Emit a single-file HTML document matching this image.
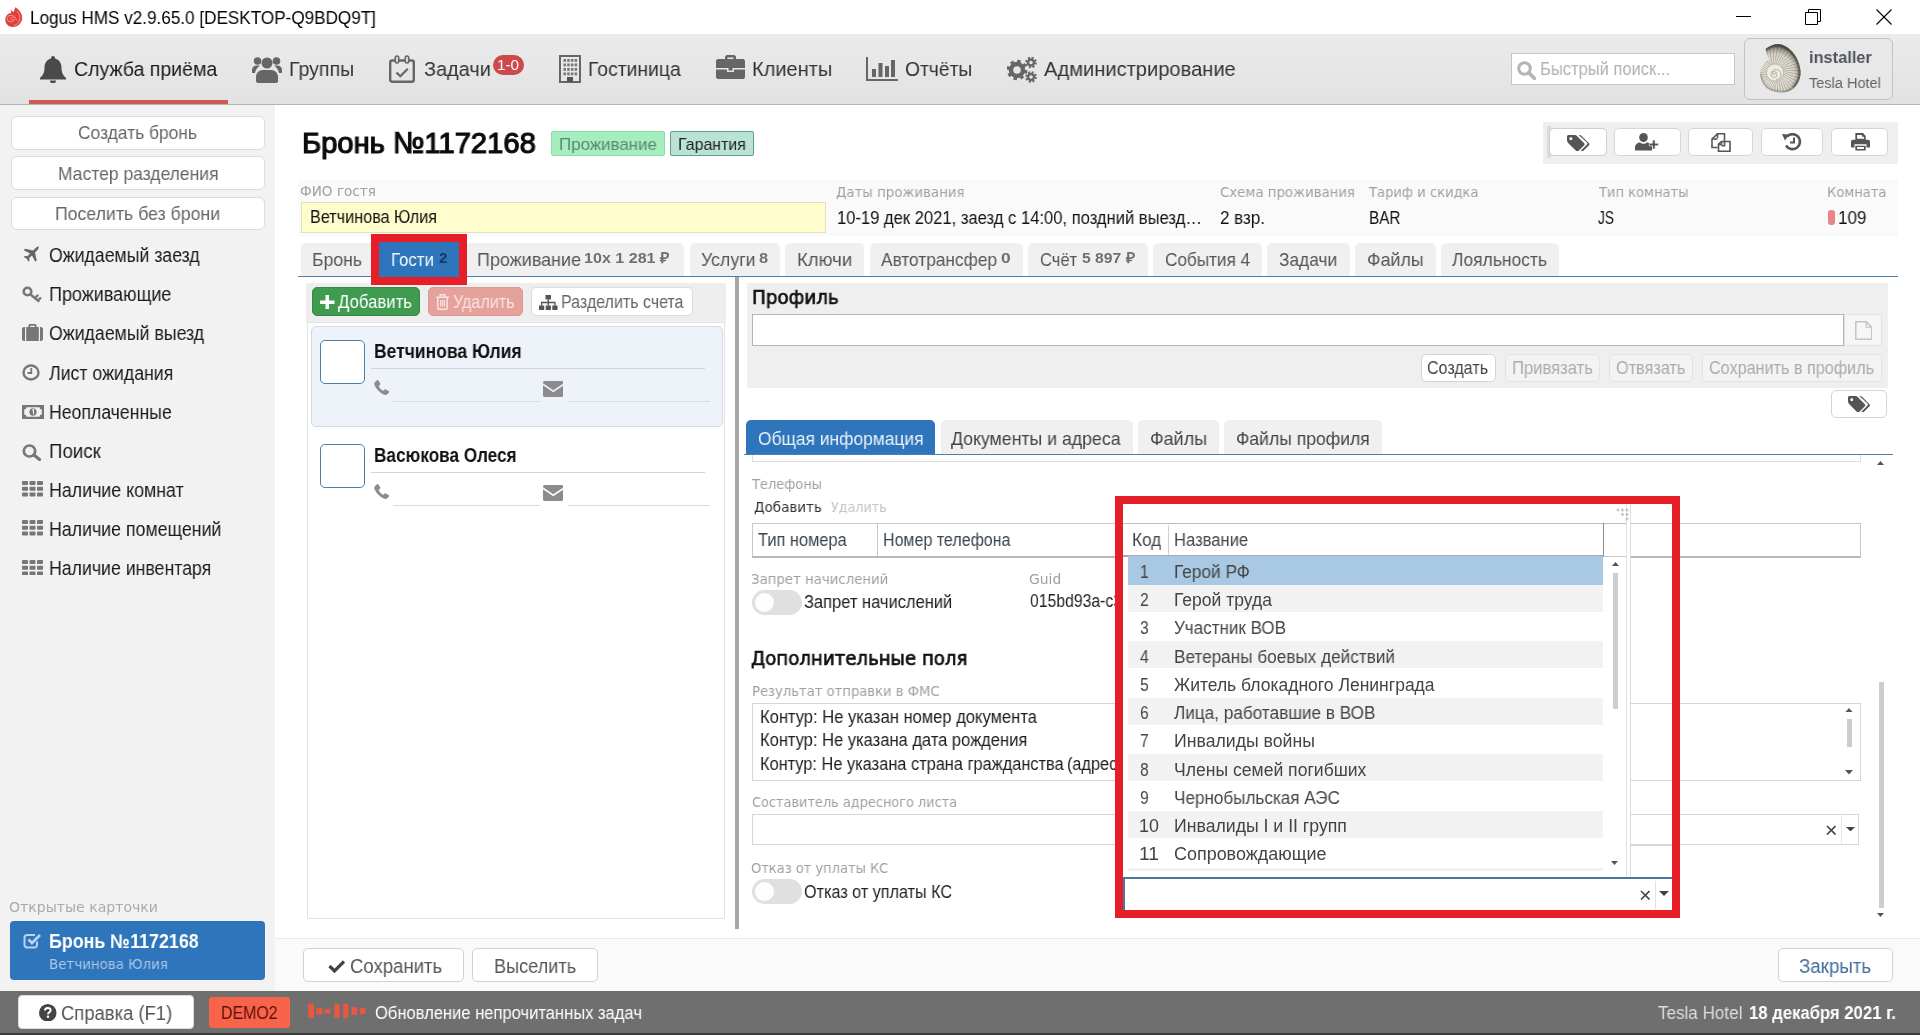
<!DOCTYPE html><html lang="ru"><head><meta charset="utf-8"><title>Logus HMS</title><style>

html,body{margin:0;padding:0;}
body{width:1920px;height:1035px;position:relative;overflow:hidden;background:#fff;font-family:"Liberation Sans", sans-serif;}
.b{position:absolute;box-sizing:border-box;}
.t{position:absolute;white-space:nowrap;line-height:1;transform-origin:0 0;will-change:transform;}

</style></head><body>
<div class="b" style="left:0px;top:0px;width:1920px;height:34px;background:#fff;"></div>
<svg class="b" style="left:5px;top:7px;" width="18" height="20" viewBox="0 0 18 20" preserveAspectRatio="none"><path d="M5.300 2.300C6.200 3.800 7.300 4.700 8.800 5L10.200.2C14.500 2.500 18 7.500 17 12.500 16 17 12.300 20 7.800 20 3.500 20 .3 16.800.3 12.800.3 9 3 6.200 6.300 6z" fill="#dd3f3b"/><g fill="none" stroke="#ff918b" stroke-width="1"><path d="M7.500 13.200a1.600 1.600 0 1 1 1.600-1.600 3.400 3.400 0 1 1-3.400-3.400c3 0 5.600 2.300 5.600 5.600"/><path d="M12 4c2.200 2.300 3.400 5.500 2.600 9-.7 3-3 5-6 5.300"/></g></svg>
<span class="t" style="left:30.04px;top:10.00px;font-size:17.5px;color:#000;transform:scaleX(0.9780);">Logus HMS v2.9.65.0 [DESKTOP-Q9BDQ9T]</span>
<div class="b" style="left:1736px;top:16px;width:15px;height:1px;background:#000;"></div>
<svg class="b" style="left:1805px;top:9px;" width="16" height="16" viewBox="0 0 16 16" preserveAspectRatio="none"><path d="M3.500 3.500V.5h12v12h-3M.5 3.500h12v12H.5z" fill="none" stroke="#000" stroke-width="1"/></svg>
<svg class="b" style="left:1876px;top:9px;" width="16" height="16" viewBox="0 0 16 16" preserveAspectRatio="none"><path d="M.5.5l15 15M15.500.5l-15 15" fill="none" stroke="#000" stroke-width="1.100"/></svg>
<div class="b" style="left:0px;top:34px;width:1920px;height:71px;background:linear-gradient(#ebebeb,#e2e2e2);border-bottom:1px solid #b4b4b4;"></div>
<div class="b" style="left:29px;top:100px;width:199px;height:4px;background:#cf5a4e;"></div>
<svg class="b" style="left:40px;top:56px;" width="26" height="27" viewBox="0 0 26 27" preserveAspectRatio="none"><path d="M13 0a2 2 0 0 1 2 2v.6c4 1 6.500 4.400 6.500 9 0 5.500 2 8.400 4.500 10.400v1.500H0V22c2.500-2 4.500-4.900 4.500-10.400 0-4.600 2.500-8 6.500-9V2a2 2 0 0 1 2-2zM10 24.500h6a3 3 0 0 1-6 0z" fill="#4a4a4a"/></svg>
<span class="t" style="left:73.87px;top:59.00px;font-size:20.5px;color:#1a1a1a;transform:scaleX(0.9524);">Служба приёма</span>
<svg class="b" style="left:252px;top:55px;" width="30" height="28" viewBox="0 0 30 28" preserveAspectRatio="none"><g fill="#666"><circle cx="15" cy="8" r="5.500"/><path d="M6 28c-1 0-2-.8-2-2v-4c0-4 3-7 7-7h8c4 0 7 3 7 7v4c0 1.200-1 2-2 2z"/><circle cx="5.500" cy="6" r="3.800"/><circle cx="24.500" cy="6" r="3.800"/><path d="M0 18v-3c0-2.500 2-4.500 4.500-4.500H8c-2 1.500-4.500 4-5 7.500zM30 18v-3c0-2.500-2-4.500-4.500-4.500H22c2 1.500 4.500 4 5 7.500z"/></g></svg>
<span class="t" style="left:288.87px;top:59.00px;font-size:20.5px;color:#333;transform:scaleX(0.9553);">Группы</span>
<svg class="b" style="left:389px;top:55px;" width="26" height="28" viewBox="0 0 26 28" preserveAspectRatio="none"><g fill="none" stroke="#666"><rect x="1.200" y="5.500" width="23.600" height="21.300" rx="2" stroke-width="2.400"/><rect x="6.300" y="1" width="3.400" height="7" rx="1.700" stroke-width="1.600" fill="#e6e6e6"/><rect x="16.300" y="1" width="3.400" height="7" rx="1.700" stroke-width="1.600" fill="#e6e6e6"/><path d="M7.500 17.500l3.800 3.800 7.500-7.500" stroke-width="2.200"/></g></svg>
<span class="t" style="left:423.87px;top:59.00px;font-size:20.5px;color:#333;transform:scaleX(0.9700);">Задачи</span>
<div class="b" style="left:492.5px;top:54.5px;width:31.5px;height:20.5px;background:#cc4a4c;border-radius:10.5px;"></div>
<span class="t" style="left:497.2px;top:58.00px;font-size:14.5px;color:#fff;transform:scaleX(1.0539);">1-0</span>
<svg class="b" style="left:559px;top:55px;" width="22" height="28" viewBox="0 0 22 28" preserveAspectRatio="none"><rect x="1" y="1" width="20" height="26" fill="none" stroke="#666" stroke-width="2"/><g fill="#777"><rect x="4.500" y="4" width="2.500" height="2.800"/><rect x="8.200" y="4" width="2.500" height="2.800"/><rect x="11.900" y="4" width="2.500" height="2.800"/><rect x="15.600" y="4" width="2.500" height="2.800"/><rect x="4.500" y="8.500" width="2.500" height="2.800"/><rect x="8.200" y="8.500" width="2.500" height="2.800"/><rect x="11.900" y="8.500" width="2.500" height="2.800"/><rect x="15.600" y="8.500" width="2.500" height="2.800"/><rect x="4.500" y="13" width="2.500" height="2.800"/><rect x="8.200" y="13" width="2.500" height="2.800"/><rect x="11.900" y="13" width="2.500" height="2.800"/><rect x="15.600" y="13" width="2.500" height="2.800"/><rect x="4.500" y="17.500" width="2.500" height="2.800"/><rect x="8.200" y="17.500" width="2.500" height="2.800"/><rect x="11.900" y="17.500" width="2.500" height="2.800"/><rect x="15.600" y="17.500" width="2.500" height="2.800"/><rect x="8" y="22" width="6" height="5" fill="#555"/></g></svg>
<span class="t" style="left:588.37px;top:59.00px;font-size:20.5px;color:#333;transform:scaleX(0.9452);">Гостиница</span>
<svg class="b" style="left:716px;top:55px;" width="29" height="24" viewBox="0 0 29 24" preserveAspectRatio="none"><g fill="#666"><path d="M9 4V2c0-1 1-2 2-2h7c1 0 2 1 2 2v2h-2.500V2.500h-6V4z"/><path d="M2 4h25c1 0 2 1 2 2v7H0V6c0-1 1-2 2-2z"/><path d="M0 14.500h11V17h7v-2.500h11V22c0 1-1 2-2 2H2c-1 0-2-1-2-2z"/><rect x="12.500" y="13" width="4" height="2.600"/></g></svg>
<span class="t" style="left:751.87px;top:59.00px;font-size:20.5px;color:#333;transform:scaleX(0.9764);">Клиенты</span>
<svg class="b" style="left:866px;top:57px;" width="32" height="24" viewBox="0 0 32 24" preserveAspectRatio="none"><path d="M1 0v23h31" fill="none" stroke="#666" stroke-width="2"/><g fill="#666"><rect x="6" y="12" width="4" height="8"/><rect x="12.500" y="6" width="4" height="14"/><rect x="19" y="9" width="4" height="11"/><rect x="25" y="3" width="4" height="17"/></g></svg>
<span class="t" style="left:904.87px;top:59.00px;font-size:20.5px;color:#333;transform:scaleX(0.9401);">Отчёты</span>
<svg class="b" style="left:1007px;top:56px;" width="31" height="27" viewBox="0 0 31 27" preserveAspectRatio="none"><g fill="none" stroke="#666"><circle cx="10" cy="14" r="6" stroke-width="4.500"/><circle cx="10" cy="14" r="8.800" stroke-width="3" stroke-dasharray="3.400 3.500"/><circle cx="24" cy="6.500" r="3" stroke-width="2.400"/><circle cx="24" cy="6.500" r="4.800" stroke-width="2" stroke-dasharray="2 1.770"/><circle cx="24" cy="21" r="3" stroke-width="2.400"/><circle cx="24" cy="21" r="4.800" stroke-width="2" stroke-dasharray="2 1.770"/></g></svg>
<span class="t" style="left:1043.87px;top:59.00px;font-size:20.5px;color:#333;transform:scaleX(0.9809);">Администрирование</span>
<div class="b" style="left:1510.5px;top:52.5px;width:224.0px;height:32.0px;background:#fff;border:1px solid #c6c6c6;"></div>
<svg class="b" style="left:1517px;top:61px;" width="19" height="19" viewBox="0 0 19 19" preserveAspectRatio="none"><circle cx="7.500" cy="7.500" r="5.800" fill="none" stroke="#b4b4b4" stroke-width="3"/><path d="M11.800 11.800l5.500 5.500" stroke="#b4b4b4" stroke-width="3.600" stroke-linecap="round"/></svg>
<span class="t" style="left:1539.98px;top:60.00px;font-size:18.5px;color:#b0b0b0;transform:scaleX(0.8930);">Быстрый поиск...</span>
<div class="b" style="left:1743.5px;top:37.5px;width:149.5px;height:62.0px;background:#e8e8e8;border:1px solid #c2c2c2;border-radius:6px;"></div>
<svg class="b" style="left:1759.500px;top:44px" width="41" height="48.500" viewBox="0 0 41 48.500">
<defs><radialGradient id="sh" gradientUnits="userSpaceOnUse" cx="15" cy="29" r="27"><stop offset="0" stop-color="#f7f4ed"/><stop offset=".4" stop-color="#ebe7de"/><stop offset=".72" stop-color="#d6d2c7"/><stop offset=".9" stop-color="#9a968b"/><stop offset="1" stop-color="#5a5750"/></radialGradient>
<clipPath id="shc"><path d="M5.500 5C9 2 14 0 18.500 0 23 .3 30 4 34 10c3 4 6 10 6.500 17 .5 6-2 13-6.500 17-3 2.500-6 4.200-10 4.500-5 .3-11-.5-16-3.500C3.500 42 .5 36 0 30c0-4 2.500-9.500 6-12.500 1.500-1 3-2 4-2C8 13 6 9 5.500 5z"/></clipPath></defs>
<g clip-path="url(#shc)"><rect width="41" height="48.500" fill="url(#sh)"/><path d="M23.0 28.5L41.7 35.2M22.9 29.7L40.3 39.2M22.6 30.8L38.3 42.9M22.2 31.9L35.8 46.3M21.6 32.9L32.7 49.3M20.8 33.8L29.3 51.7M19.9 34.6L25.5 53.6M18.9 35.2L21.4 54.8M17.8 35.6L17.2 55.4M16.7 35.9L13.0 55.4M15.5 36.0L8.8 54.7M14.3 35.9L4.8 53.3M13.2 35.6L1.1 51.3M12.1 35.2L-2.3 48.8M11.1 34.6L-5.3 45.7M10.2 33.8L-7.7 42.3M9.4 32.9L-9.6 38.5M8.8 31.9L-10.8 34.4M8.4 30.8L-11.4 30.2M8.1 29.7L-11.4 26.0M8.0 28.5L-10.7 21.8M8.1 27.3L-9.3 17.8M8.4 26.2L-7.3 14.1M8.8 25.1L-4.8 10.7M9.4 24.1L-1.7 7.7M10.2 23.2L1.7 5.3M11.1 22.4L5.5 3.4M12.1 21.8L9.6 2.2M13.2 21.4L13.8 1.6M14.3 21.1L18.0 1.6M15.5 21.0L22.2 2.3M16.7 21.1L26.2 3.7M17.8 21.4L29.9 5.7M18.9 21.8L33.3 8.2M19.9 22.4L36.3 11.3M20.8 23.2L38.7 14.7M21.6 24.1L40.6 18.5M22.2 25.1L41.8 22.6M22.6 26.2L42.4 26.8M22.9 27.3L42.4 31.0" stroke="#4d4a42" stroke-opacity=".38" stroke-width=".8" fill="none"/>
<circle cx="15" cy="28.500" r="8.500" fill="#efece4"/><circle cx="15" cy="28.500" r="8.500" fill="none" stroke="#b9b5a9" stroke-width=".8"/>
<path d="M15.500 29a1.500 1.500 0 1 1-1.500-1.500 3 3 0 1 1-3 3 5 5 0 1 1 5 5" fill="none" stroke="#b3afa2" stroke-width="1"/>
<path d="M5.500 5C9 2 14 0 18.500 0 23 .3 30 4 34 10c3 4 6 10 6.500 17 .5 6-2 13-6.500 17" fill="none" stroke="#3f3d38" stroke-opacity=".5" stroke-width="5"/>
<path d="M34 44c-3 2.500-6 4.200-10 4.500-5 .3-11-.5-16-3.500C3.500 42 .5 36 0 30" fill="none" stroke="#6a675f" stroke-opacity=".35" stroke-width="4"/></g>
</svg>
<span class="t" style="left:1808.87px;top:49.00px;font-size:17px;color:#50545a;font-weight:bold;transform:scaleX(0.9641);">installer</span>
<span class="t" style="left:1808.95px;top:75.00px;font-size:15.5px;color:#60646a;transform:scaleX(0.9376);">Tesla Hotel</span>
<div class="b" style="left:0px;top:105px;width:275px;height:886px;background:#f2f2f2;"></div>
<div class="b" style="left:10.5px;top:116px;width:254.0px;height:33.5px;background:#fff;border:1px solid #dcdcdc;border-radius:6px;"></div>
<span class="t" style="left:77.98px;top:124.00px;font-size:18.5px;color:#666;transform:scaleX(0.9411);">Создать бронь</span>
<div class="b" style="left:10.5px;top:156px;width:254.0px;height:33.5px;background:#fff;border:1px solid #dcdcdc;border-radius:6px;"></div>
<span class="t" style="left:57.98px;top:165.00px;font-size:18.5px;color:#666;transform:scaleX(0.9459);">Мастер разделения</span>
<div class="b" style="left:10.5px;top:197px;width:254.0px;height:32.5px;background:#fff;border:1px solid #dcdcdc;border-radius:6px;"></div>
<span class="t" style="left:54.98px;top:205.00px;font-size:18.5px;color:#666;transform:scaleX(0.9567);">Поселить без брони</span>
<span class="t" style="left:49.4px;top:245.00px;font-size:20px;color:#1a1a1a;transform:scaleX(0.8851);">Ожидаемый заезд</span>
<span class="t" style="left:49.4px;top:284.00px;font-size:20px;color:#1a1a1a;transform:scaleX(0.8985);">Проживающие</span>
<span class="t" style="left:49.4px;top:323.00px;font-size:20px;color:#1a1a1a;transform:scaleX(0.8864);">Ожидаемый выезд</span>
<span class="t" style="left:49.4px;top:363.00px;font-size:20px;color:#1a1a1a;transform:scaleX(0.8859);">Лист ожидания</span>
<span class="t" style="left:49.4px;top:402.00px;font-size:20px;color:#1a1a1a;transform:scaleX(0.8826);">Неоплаченные</span>
<span class="t" style="left:49.4px;top:441.00px;font-size:20px;color:#1a1a1a;transform:scaleX(0.9328);">Поиск</span>
<span class="t" style="left:49.4px;top:480.00px;font-size:20px;color:#1a1a1a;transform:scaleX(0.8896);">Наличие комнат</span>
<span class="t" style="left:49.4px;top:519.00px;font-size:20px;color:#1a1a1a;transform:scaleX(0.8875);">Наличие помещений</span>
<span class="t" style="left:49.4px;top:558.00px;font-size:20px;color:#1a1a1a;transform:scaleX(0.8851);">Наличие инвентаря</span>
<svg class="b" style="left:22px;top:246px;" width="17" height="16" viewBox="0 0 17 16" preserveAspectRatio="none"><path d="M16.500.5c.6.600.3 2-.8 3.200L13 6.400l1.700 8-1.400 1.300-3.300-6.300-2.800 2.700.3 2.600-1 1-1.700-3-3-1.700 1-1 2.600.3L8.100 7.500 1.800 4.200l1.300-1.400 8 1.700 2.700-2.700C15 .7 16 .1 16.500.5z" fill="#666"/></svg>
<svg class="b" style="left:22px;top:286px;" width="20" height="17" viewBox="0 0 20 17" preserveAspectRatio="none"><g fill="none" stroke="#777"><circle cx="5.500" cy="5.500" r="3.800" stroke-width="2.600"/><path d="M8.500 8.500l8 6.500M13 12l2.500-2.500M16 14.500l2.300-2.300" stroke-width="2.400" stroke-linecap="round"/></g></svg>
<svg class="b" style="left:22px;top:324px;" width="21" height="17" viewBox="0 0 21 17" preserveAspectRatio="none"><g fill="#777"><path d="M6.500 3V1.500C6.500.7 7.200 0 8 0h5c.8 0 1.500.7 1.500 1.500V3h-1.800V1.700H8.300V3z"/><rect x="4.200" y="3" width="12.600" height="14"/><path d="M0 5c0-1 1-2 2-2h1v14H2c-1 0-2-1-2-2zM18 3h1c1 0 2 1 2 2v10c0 1-1 2-2 2h-1z"/></g></svg>
<svg class="b" style="left:22px;top:364px;" width="18" height="17" viewBox="0 0 18 17" preserveAspectRatio="none"><ellipse cx="9" cy="8.500" rx="7.500" ry="7" fill="none" stroke="#777" stroke-width="2.400"/><path d="M9.300 4v5H5.500" fill="none" stroke="#777" stroke-width="1.800"/></svg>
<svg class="b" style="left:22px;top:405px;" width="22" height="14" viewBox="0 0 22 14" preserveAspectRatio="none"><path d="M0 0h22v14H0z" fill="#777"/><path d="M4.500 2.200h13a2.300 2.300 0 0 0 2.300 2.300v5a2.300 2.300 0 0 0-2.300 2.300h-13A2.300 2.300 0 0 0 2.200 9.500v-5A2.300 2.300 0 0 0 4.500 2.200z" fill="#f2f2f2"/><ellipse cx="11" cy="7" rx="3.600" ry="3.800" fill="#777"/><path d="M10.300 5.200l1.200-.8v4.800" fill="none" stroke="#f2f2f2" stroke-width="1.100"/></svg>
<svg class="b" style="left:22px;top:444px;" width="20" height="17" viewBox="0 0 20 17" preserveAspectRatio="none"><ellipse cx="7.500" cy="7" rx="5.700" ry="5.500" fill="none" stroke="#777" stroke-width="2.700"/><path d="M12 11l5.500 4.500" stroke="#777" stroke-width="3.200" stroke-linecap="round"/></svg>
<svg class="b" style="left:22px;top:481.2px;" width="21" height="15.600000000000023" viewBox="0 0 21 15.400" preserveAspectRatio="none"><g fill="#777"><rect x="0" y="0" width="6" height="4" rx=".8"/><rect x="7.5" y="0" width="6" height="4" rx=".8"/><rect x="15" y="0" width="6" height="4" rx=".8"/><rect x="0" y="5.7" width="6" height="4" rx=".8"/><rect x="7.5" y="5.7" width="6" height="4" rx=".8"/><rect x="15" y="5.7" width="6" height="4" rx=".8"/><rect x="0" y="11.4" width="6" height="4" rx=".8"/><rect x="7.5" y="11.4" width="6" height="4" rx=".8"/><rect x="15" y="11.4" width="6" height="4" rx=".8"/></g></svg>
<svg class="b" style="left:22px;top:520.4px;" width="21" height="15.600000000000023" viewBox="0 0 21 15.400" preserveAspectRatio="none"><g fill="#777"><rect x="0" y="0" width="6" height="4" rx=".8"/><rect x="7.5" y="0" width="6" height="4" rx=".8"/><rect x="15" y="0" width="6" height="4" rx=".8"/><rect x="0" y="5.7" width="6" height="4" rx=".8"/><rect x="7.5" y="5.7" width="6" height="4" rx=".8"/><rect x="15" y="5.7" width="6" height="4" rx=".8"/><rect x="0" y="11.4" width="6" height="4" rx=".8"/><rect x="7.5" y="11.4" width="6" height="4" rx=".8"/><rect x="15" y="11.4" width="6" height="4" rx=".8"/></g></svg>
<svg class="b" style="left:22px;top:559.6px;" width="21" height="15.600000000000023" viewBox="0 0 21 15.400" preserveAspectRatio="none"><g fill="#777"><rect x="0" y="0" width="6" height="4" rx=".8"/><rect x="7.5" y="0" width="6" height="4" rx=".8"/><rect x="15" y="0" width="6" height="4" rx=".8"/><rect x="0" y="5.7" width="6" height="4" rx=".8"/><rect x="7.5" y="5.7" width="6" height="4" rx=".8"/><rect x="15" y="5.7" width="6" height="4" rx=".8"/><rect x="0" y="11.4" width="6" height="4" rx=".8"/><rect x="7.5" y="11.4" width="6" height="4" rx=".8"/><rect x="15" y="11.4" width="6" height="4" rx=".8"/></g></svg>
<span class="t" style="left:9.25px;top:901.00px;font-size:13.6px;color:#aaa;font-family:'DejaVu Sans',sans-serif;transform:scaleX(1.0346);">Открытые карточки</span>
<div class="b" style="left:10px;top:921px;width:255px;height:59px;background:#2e75bb;border-radius:4px;"></div>
<svg class="b" style="left:22.5px;top:932px;" width="18.5" height="17" viewBox="0 0 18.500 17" preserveAspectRatio="none"><path d="M14 9.500V13a2.500 2.500 0 0 1-2.500 2.500H4A2.500 2.500 0 0 1 1.500 13V5.500A2.500 2.500 0 0 1 4 3h8" fill="none" stroke="#b9d3ee" stroke-width="2"/><path d="M5.500 7.500l3.500 3.500 8-8" fill="none" stroke="#b9d3ee" stroke-width="2.800"/></svg>
<span class="t" style="left:48.93px;top:932.00px;font-size:19.5px;color:#fff;font-weight:bold;transform:scaleX(0.9146);">Бронь №1172168</span>
<span class="t" style="left:49.26px;top:958.00px;font-size:13.5px;color:#a9c8ea;font-family:'DejaVu Sans',sans-serif;transform:scaleX(0.9924);">Ветчинова Юлия</span>
<span class="t" style="left:302.35px;top:128.00px;font-size:30px;color:#0c0c0c;transform:scaleX(0.9728);-webkit-text-stroke:1.2px #0c0c0c;">Бронь №1172168</span>
<div class="b" style="left:551px;top:131px;width:113.5px;height:24.5px;background:#a6eec0;border:1px solid #86dfa6;border-radius:2px;"></div>
<span class="t" style="left:559.07px;top:136.00px;font-size:17px;color:#588a6e;transform:scaleX(0.9940);">Проживание</span>
<div class="b" style="left:670px;top:131px;width:84px;height:24.5px;background:#b9e3d3;border:1px solid #5f9f8c;border-radius:2px;"></div>
<span class="t" style="left:678.07px;top:136.00px;font-size:17px;color:#222;transform:scaleX(0.9360);">Гарантия</span>
<div class="b" style="left:1543px;top:122px;width:355px;height:42px;background:#efefef;"></div>
<div class="b" style="left:1549px;top:128px;width:58px;height:28px;background:#fff;border:1px solid #d6d6d6;border-radius:5px;"></div>
<div class="b" style="left:1614px;top:128px;width:66.5px;height:28px;background:#fff;border:1px solid #d6d6d6;border-radius:5px;"></div>
<div class="b" style="left:1688px;top:128px;width:64.5px;height:28px;background:#fff;border:1px solid #d6d6d6;border-radius:5px;"></div>
<div class="b" style="left:1761px;top:128px;width:61.5px;height:28px;background:#fff;border:1px solid #d6d6d6;border-radius:5px;"></div>
<div class="b" style="left:1831px;top:128px;width:56.5px;height:28px;background:#fff;border:1px solid #d6d6d6;border-radius:5px;"></div>
<div class="b" style="left:1547px;top:126px;width:4px;height:32px;background:#dcdcdc;"></div>
<div class="b" style="left:1549px;top:128px;width:58px;height:28px;background:#fff;border:1px solid #d0d0d0;border-radius:5px;"></div>
<svg class="b" style="left:1567px;top:134.5px;" width="22.5" height="16.5" viewBox="0 0 22.200 16.600" preserveAspectRatio="none"><g fill="#555"><path d="M0 1.500C0 .7.700 0 1.500 0h6.300c.6 0 1.300.3 1.700.7l7.500 7.500c.6.600.6 1.500 0 2.100l-5.800 5.800c-.6.600-1.500.6-2.100 0L1.600 8.600C1.200 8.200 0 6.500 0 5.900zM3.800 2.300a1.500 1.500 0 1 0 0 3 1.500 1.500 0 0 0 0-3z" fill-rule="evenodd"/><path d="M11.500 0h1c.6 0 1.300.3 1.700.7l7.500 7.500c.6.600.6 1.500 0 2.100l-5.800 5.800c-.6.600-1.500.6-2.100 0l-.3-.3 6.200-6.200c.6-.6.600-1.500 0-2.100z"/></g></svg>
<svg class="b" style="left:1635px;top:133px;" width="24" height="17.5" viewBox="0 0 24 17.500" preserveAspectRatio="none"><g fill="#555"><ellipse cx="8.500" cy="4.500" rx="4.300" ry="4.500"/><path d="M0 17.500v-3C0 11 3 9.500 5 9.500c1 .8 2.200 1.300 3.500 1.300s2.500-.5 3.500-1.300c2 0 5 1.500 5 5v3z"/><path d="M17.500 7h2.600v3.200H23.500v2.600h-3.400V16h-2.600v-3.200h-3.300v-2.600h3.300z" stroke="#fff" stroke-width=".6"/></g></svg>
<svg class="b" style="left:1711px;top:132.5px;" width="20" height="19.0" viewBox="0 0 20 19" preserveAspectRatio="none"><g fill="none" stroke="#555" stroke-width="1.600"><path d="M6.500 5V.8h7v12h-3"/><path d="M6.500.8L1 6v8.500h5.500"/><path d="M6.500 6h-5"/><path d="M10.500 8.500H19v9.700H7.500v-7z"/><path d="M10.500 8.500v3h-3"/></g></svg>
<svg class="b" style="left:1782px;top:133px;" width="21" height="17.5" viewBox="0 0 21 17.500" preserveAspectRatio="none"><path d="M5 3.500A7.500 7.500 0 1 1 4 12.500" fill="none" stroke="#555" stroke-width="2.600"/><path d="M0 1l7 .5L3 7.500z" fill="#555"/><path d="M12 4.500V9.500H8" fill="none" stroke="#555" stroke-width="2"/></svg>
<svg class="b" style="left:1851px;top:133px;" width="19" height="17.5" viewBox="0 0 22 18" preserveAspectRatio="none"><g fill="#555"><path d="M5 0h9l3 3v4.500H5zM7 2v4h8V3.800h-2.500V2z" fill-rule="evenodd"/><path d="M2 7h18c1 0 2 1 2 2v6h-4v-3.500H4V15H0V9c0-1 1-2 2-2z"/><path d="M5 13h12v5H5zM7 14.500v2h8v-2z" fill-rule="evenodd"/></g></svg>
<div class="b" style="left:298px;top:180px;width:1600px;height:56px;background:#fafafa;"></div>
<span class="t" style="left:300.25px;top:185.00px;font-size:13.6px;color:#a0a0a0;font-family:'DejaVu Sans',sans-serif;transform:scaleX(0.9944);">ФИО гостя</span>
<div class="b" style="left:301px;top:202px;width:524.5px;height:31px;background:#fffdcc;border:1px solid #e0dfc0;"></div>
<span class="t" style="left:310.04px;top:209.00px;font-size:17.5px;color:#111;transform:scaleX(0.9252);">Ветчинова Юлия</span>
<span class="t" style="left:836.25px;top:186.00px;font-size:13.6px;color:#a0a0a0;font-family:'DejaVu Sans',sans-serif;transform:scaleX(0.9802);">Даты проживания</span>
<span class="t" style="left:836.54px;top:210.00px;font-size:17.5px;color:#111;transform:scaleX(0.9473);">10-19 дек 2021, заезд с 14:00, поздний выезд…</span>
<span class="t" style="left:1220.25px;top:186.00px;font-size:13.6px;color:#a0a0a0;font-family:'DejaVu Sans',sans-serif;transform:scaleX(0.9785);">Схема проживания</span>
<span class="t" style="left:1220.04px;top:210.00px;font-size:17.5px;color:#111;transform:scaleX(0.9696);">2 взр.</span>
<span class="t" style="left:1369.25px;top:186.00px;font-size:13.6px;color:#a0a0a0;font-family:'DejaVu Sans',sans-serif;transform:scaleX(0.9634);">Тариф и скидка</span>
<span class="t" style="left:1369.04px;top:210.00px;font-size:17.5px;color:#111;transform:scaleX(0.8732);">BAR</span>
<span class="t" style="left:1599.25px;top:186.00px;font-size:13.6px;color:#a0a0a0;font-family:'DejaVu Sans',sans-serif;transform:scaleX(0.9624);">Тип комнаты</span>
<span class="t" style="left:1598.04px;top:210.00px;font-size:17.5px;color:#111;transform:scaleX(0.7790);">JS</span>
<span class="t" style="left:1827.25px;top:186.00px;font-size:13.6px;color:#a0a0a0;font-family:'DejaVu Sans',sans-serif;transform:scaleX(0.9643);">Комната</span>
<div class="b" style="left:1828px;top:210px;width:7px;height:15px;background:#ea8585;border-radius:3px;"></div>
<span class="t" style="left:1838.04px;top:210.00px;font-size:17.5px;color:#111;transform:scaleX(0.9732);">109</span>
<div class="b" style="left:300.5px;top:242.5px;width:79.0px;height:33.5px;background:#f0f0f0;border-radius:5px 5px 0 0;"></div>
<span class="t" style="left:311.95px;top:250.00px;font-size:19px;color:#555;transform:scaleX(0.9278);">Бронь</span>
<div class="b" style="left:466px;top:242.5px;width:218px;height:33.5px;background:#f0f0f0;border-radius:5px 5px 0 0;"></div>
<span class="t" style="left:476.95px;top:250.00px;font-size:19px;color:#555;transform:scaleX(0.9460);">Проживание</span>
<span class="t" style="left:584.17px;top:250.00px;font-size:15px;color:#707070;font-weight:bold;transform:scaleX(1.0720);">10x 1 281 ₽</span>
<div class="b" style="left:689.5px;top:242.5px;width:90.0px;height:33.5px;background:#f0f0f0;border-radius:5px 5px 0 0;"></div>
<span class="t" style="left:700.96px;top:250.00px;font-size:19px;color:#555;transform:scaleX(0.9340);">Услуги</span>
<span class="t" style="left:758.67px;top:250.00px;font-size:15px;color:#707070;font-weight:bold;transform:scaleX(1.0978);">8</span>
<div class="b" style="left:785px;top:242.5px;width:79px;height:33.5px;background:#f0f0f0;border-radius:5px 5px 0 0;"></div>
<span class="t" style="left:796.96px;top:250.00px;font-size:19px;color:#555;transform:scaleX(0.9749);">Ключи</span>
<div class="b" style="left:869.5px;top:242.5px;width:153.0px;height:33.5px;background:#f0f0f0;border-radius:5px 5px 0 0;"></div>
<span class="t" style="left:880.96px;top:250.00px;font-size:19px;color:#555;transform:scaleX(0.9098);">Автотрансфер</span>
<span class="t" style="left:1001.17px;top:250.00px;font-size:15px;color:#707070;font-weight:bold;transform:scaleX(1.1578);">0</span>
<div class="b" style="left:1028px;top:242.5px;width:119.5px;height:33.5px;background:#f0f0f0;border-radius:5px 5px 0 0;"></div>
<span class="t" style="left:1039.95px;top:250.00px;font-size:19px;color:#555;transform:scaleX(0.8691);">Счёт</span>
<span class="t" style="left:1081.67px;top:250.00px;font-size:15px;color:#707070;font-weight:bold;transform:scaleX(1.0481);">5 897 ₽</span>
<div class="b" style="left:1153px;top:242.5px;width:109px;height:33.5px;background:#f0f0f0;border-radius:5px 5px 0 0;"></div>
<span class="t" style="left:1164.95px;top:250.00px;font-size:19px;color:#555;transform:scaleX(0.9026);">События 4</span>
<div class="b" style="left:1267px;top:242.5px;width:82.5px;height:33.5px;background:#f0f0f0;border-radius:5px 5px 0 0;"></div>
<span class="t" style="left:1278.95px;top:250.00px;font-size:19px;color:#555;transform:scaleX(0.9107);">Задачи</span>
<div class="b" style="left:1355px;top:242.5px;width:81px;height:33.5px;background:#f0f0f0;border-radius:5px 5px 0 0;"></div>
<span class="t" style="left:1366.95px;top:250.00px;font-size:19px;color:#555;transform:scaleX(0.9375);">Файлы</span>
<div class="b" style="left:1441px;top:242.5px;width:118px;height:33.5px;background:#f0f0f0;border-radius:5px 5px 0 0;"></div>
<span class="t" style="left:1451.95px;top:250.00px;font-size:19px;color:#555;transform:scaleX(0.9190);">Лояльность</span>
<div class="b" style="left:298px;top:275.5px;width:1600px;height:1.5px;background:#4a7fb8;"></div>
<div class="b" style="left:306px;top:282.5px;width:419.5px;height:39.5px;background:#eeeeee;"></div>
<div class="b" style="left:312px;top:287px;width:108px;height:29px;background:#3f9b50;border:1px solid #38884a;border-radius:5px;"></div>
<svg class="b" style="left:320px;top:294.5px;" width="14.5" height="14.5" viewBox="0 0 14.500 14.500" preserveAspectRatio="none"><path d="M5.500 0h3.500v5.500h5.500V9H9v5.500H5.500V9H0V5.500h5.500z" fill="#fff"/></svg>
<span class="t" style="left:337.98px;top:293.00px;font-size:18.5px;color:#fff;transform:scaleX(0.9055);">Добавить</span>
<div class="b" style="left:428px;top:287px;width:95px;height:29px;background:#e5a19c;border:1px solid #dc9892;border-radius:5px;"></div>
<svg class="b" style="left:436px;top:294px;" width="13" height="16" viewBox="0 0 13 16" preserveAspectRatio="none"><g fill="none" stroke="#f9e3e1" stroke-width="1.500"><path d="M0 3.200h13M4.200 3V.8h4.600V3"/><path d="M1.800 3.500v10.700c0 .6.500 1 1 1h7.400c.5 0 1-.4 1-1V3.500"/><path d="M4.600 6v6.500M6.500 6v6.500M8.400 6v6.500" stroke-width="1.200"/></g></svg>
<span class="t" style="left:453.48px;top:293.00px;font-size:18.5px;color:#f9e3e1;transform:scaleX(0.8712);">Удалить</span>
<div class="b" style="left:531px;top:287px;width:161.5px;height:29px;background:#fff;border:1px solid #dcdcdc;border-radius:5px;"></div>
<svg class="b" style="left:539px;top:295px;" width="18.5" height="15" viewBox="0 0 18.500 15" preserveAspectRatio="none"><g fill="#555"><rect x="6.500" y="0" width="5.500" height="4.500"/><rect x="0" y="10.500" width="5.200" height="4.500"/><rect x="6.700" y="10.500" width="5.200" height="4.500"/><rect x="13.300" y="10.500" width="5.200" height="4.500"/><path d="M8.600 4.500h1.400v2.300h6.600v3.700h-1.400V8.200H10v2.300H8.600V8.200H3.300v2.300H1.900V6.800h6.700z"/></g></svg>
<span class="t" style="left:561.48px;top:293.00px;font-size:18.5px;color:#666;transform:scaleX(0.8651);">Разделить счета</span>
<div class="b" style="left:307px;top:322px;width:418px;height:596.5px;background:#fff;border:1px solid #e3e3e3;"></div>
<div class="b" style="left:310.5px;top:326px;width:412.0px;height:100.5px;background:#eef3f9;border:1px solid #cfdbea;border-radius:5px;"></div>
<div class="b" style="left:320px;top:339.5px;width:44.5px;height:44.5px;background:#fff;border:1.500px solid #4a80b0;border-radius:5px;"></div>
<span class="t" style="left:374.43px;top:342.00px;font-size:19.5px;color:#111;font-weight:bold;transform:scaleX(0.8970);">Ветчинова Юлия</span>
<div class="b" style="left:371px;top:367.5px;width:334px;height:1.0px;background:#d4d4d4;"></div>
<svg class="b" style="left:374px;top:380.0px;" width="15.5" height="15.0" viewBox="0 0 16 15.200" preserveAspectRatio="none"><path d="M3.200.3c.4-.4 1-.4 1.300.1l1.900 3c.3.400.2.900-.2 1.300L4.800 6c1 2.200 2.600 3.900 4.800 5l1.400-1.300c.4-.4.900-.4 1.300-.2l3 1.900c.5.300.5.900.1 1.300l-1.700 1.700c-.8.800-2 1-3 .6C6 13.200 2 9 .4 4.900 0 3.900.3 2.800 1.100 2z" fill="#8c8c8c"/></svg>
<div class="b" style="left:393px;top:400.5px;width:146.5px;height:1.0px;background:#dcdcdc;"></div>
<svg class="b" style="left:542.5px;top:381.0px;" width="20.5" height="16.0" viewBox="0 0 20.500 16" preserveAspectRatio="none"><path d="M0 1.500C0 .7.700 0 1.500 0h17.500c.8 0 1.500.7 1.500 1.500v.8l-10.250 7L0 2.300zM0 4.300l10.250 7 10.250-7v10.200c0 .8-.7 1.500-1.500 1.500H1.500C.7 16 0 15.300 0 14.500z" fill="#8c8c8c"/></svg>
<div class="b" style="left:568px;top:400.5px;width:142px;height:1.0px;background:#dcdcdc;"></div>
<div class="b" style="left:320px;top:443.8px;width:44.5px;height:44.5px;background:#fff;border:1.500px solid #4a80b0;border-radius:5px;"></div>
<span class="t" style="left:374.43px;top:446.00px;font-size:19.5px;color:#111;font-weight:bold;transform:scaleX(0.8822);">Васюкова Олеся</span>
<div class="b" style="left:371px;top:471.8px;width:334px;height:1.0px;background:#d4d4d4;"></div>
<svg class="b" style="left:374px;top:484.3px;" width="15.5" height="15.0" viewBox="0 0 16 15.200" preserveAspectRatio="none"><path d="M3.200.3c.4-.4 1-.4 1.300.1l1.900 3c.3.400.2.900-.2 1.300L4.800 6c1 2.200 2.600 3.900 4.800 5l1.400-1.300c.4-.4.900-.4 1.300-.2l3 1.900c.5.300.5.900.1 1.300l-1.700 1.700c-.8.800-2 1-3 .6C6 13.200 2 9 .4 4.900 0 3.900.3 2.800 1.100 2z" fill="#8c8c8c"/></svg>
<div class="b" style="left:393px;top:504.8px;width:146.5px;height:1.0px;background:#dcdcdc;"></div>
<svg class="b" style="left:542.5px;top:485.3px;" width="20.5" height="16.0" viewBox="0 0 20.500 16" preserveAspectRatio="none"><path d="M0 1.500C0 .7.700 0 1.500 0h17.500c.8 0 1.500.7 1.500 1.500v.8l-10.250 7L0 2.300zM0 4.300l10.250 7 10.250-7v10.200c0 .8-.7 1.500-1.500 1.500H1.500C.7 16 0 15.300 0 14.500z" fill="#8c8c8c"/></svg>
<div class="b" style="left:568px;top:504.8px;width:142px;height:1.0px;background:#dcdcdc;"></div>
<div class="b" style="left:735.4px;top:277px;width:3.2000000000000455px;height:651.5px;background:#a6a6a6;"></div>
<div class="b" style="left:747px;top:282.5px;width:1141px;height:105.0px;background:#efefef;"></div>
<span class="t" style="left:751.86px;top:288.00px;font-size:18.9px;color:#111;font-family:'DejaVu Sans',sans-serif;transform:scaleX(0.9697);-webkit-text-stroke:.7px #111;">Профиль</span>
<div class="b" style="left:752px;top:314px;width:1091.5px;height:31.5px;background:#fff;border:1px solid #b4b4b4;"></div>
<div class="b" style="left:1843.5px;top:314px;width:38.0px;height:31.5px;background:#f6f6f6;border:1px solid #e2e2e2;"></div>
<svg class="b" style="left:1854.5px;top:320.5px;" width="17.5" height="19.0" viewBox="0 0 17.500 19" preserveAspectRatio="none"><path d="M.8.800h10.500l5.400 5.400v12H.8z" fill="none" stroke="#c4c4c4" stroke-width="1.500"/><path d="M11.300.8v5.400h5.400" fill="none" stroke="#c4c4c4" stroke-width="1.300"/></svg>
<div class="b" style="left:1420.5px;top:353.5px;width:75.5px;height:28.5px;background:#fff;border:1px solid #d4d4d4;border-radius:5px;"></div>
<span class="t" style="left:1426.98px;top:359.00px;font-size:18.5px;color:#444;transform:scaleX(0.8681);">Создать</span>
<div class="b" style="left:1505px;top:353.5px;width:95px;height:28.5px;background:#f3f3f3;border:1px solid #e2e2e2;border-radius:5px;"></div>
<span class="t" style="left:1511.98px;top:359.00px;font-size:18.5px;color:#aaa;transform:scaleX(0.8978);">Привязать</span>
<div class="b" style="left:1609px;top:353.5px;width:83.5px;height:28.5px;background:#f3f3f3;border:1px solid #e2e2e2;border-radius:5px;"></div>
<span class="t" style="left:1615.98px;top:359.00px;font-size:18.5px;color:#aaa;transform:scaleX(0.8792);">Отвязать</span>
<div class="b" style="left:1701.5px;top:353.5px;width:180.0999999999999px;height:28.5px;background:#f3f3f3;border:1px solid #e2e2e2;border-radius:5px;"></div>
<span class="t" style="left:1708.58px;top:359.00px;font-size:18.5px;color:#aaa;transform:scaleX(0.8750);">Сохранить в профиль</span>
<div class="b" style="left:1830.5px;top:389.5px;width:56.5px;height:28.0px;background:#fff;border:1px solid #d4d4d4;border-radius:5px;"></div>
<svg class="b" style="left:1848px;top:395.5px;" width="22" height="16.5" viewBox="0 0 22.200 16.600" preserveAspectRatio="none"><g fill="#555"><path d="M0 1.500C0 .7.700 0 1.500 0h6.300c.6 0 1.300.3 1.700.7l7.500 7.500c.6.600.6 1.500 0 2.100l-5.800 5.800c-.6.600-1.500.6-2.100 0L1.600 8.600C1.200 8.200 0 6.500 0 5.900zM3.800 2.300a1.500 1.500 0 1 0 0 3 1.500 1.500 0 0 0 0-3z" fill-rule="evenodd"/><path d="M11.500 0h1c.6 0 1.300.3 1.700.7l7.500 7.500c.6.600.6 1.500 0 2.100l-5.800 5.800c-.6.600-1.500.6-2.100 0l-.3-.3 6.200-6.200c.6-.6.600-1.500 0-2.100z"/></g></svg>
<div class="b" style="left:746px;top:420px;width:189px;height:35px;background:#2e75bb;border-radius:5px 5px 0 0;"></div>
<span class="t" style="left:757.98px;top:430.00px;font-size:18.5px;color:#eaf2fa;transform:scaleX(0.9407);">Общая информация</span>
<div class="b" style="left:940.5px;top:420px;width:192.0px;height:34px;background:#f0f0f0;border-radius:5px 5px 0 0;"></div>
<span class="t" style="left:951.48px;top:430.00px;font-size:18.5px;color:#444;transform:scaleX(0.9568);">Документы и адреса</span>
<div class="b" style="left:1138px;top:420px;width:80.75px;height:34px;background:#f0f0f0;border-radius:5px 5px 0 0;"></div>
<span class="t" style="left:1149.98px;top:430.00px;font-size:18.5px;color:#444;transform:scaleX(0.9704);">Файлы</span>
<div class="b" style="left:1224px;top:420px;width:157.75px;height:34px;background:#f0f0f0;border-radius:5px 5px 0 0;"></div>
<span class="t" style="left:1235.98px;top:430.00px;font-size:18.5px;color:#444;transform:scaleX(0.9496);">Файлы профиля</span>
<div class="b" style="left:743.5px;top:453.5px;width:1149.0px;height:1.5px;background:#4a7fb8;"></div>
<div class="b" style="left:752px;top:455px;width:1108.5px;height:6.5px;border:1px solid #dcdcdc;border-top:none;"></div>
<svg class="b" style="left:1877px;top:461px;" width="7" height="4" viewBox="0 0 7 4" preserveAspectRatio="none"><path d="M0 4L3.500 0 7 4z" fill="#555"/></svg>
<div class="b" style="left:1878.5px;top:682px;width:5.0px;height:226px;background:#cdcdcd;"></div>
<svg class="b" style="left:1876.5px;top:912.5px;" width="7.0" height="4.0" viewBox="0 0 7 4" preserveAspectRatio="none"><path d="M0 0h7L3.500 4z" fill="#555"/></svg>
<span class="t" style="left:751.75px;top:478.00px;font-size:13.6px;color:#a0a0a0;font-family:'DejaVu Sans',sans-serif;transform:scaleX(0.9552);">Телефоны</span>
<span class="t" style="left:754.23px;top:500.00px;font-size:14px;color:#333;font-family:'DejaVu Sans',sans-serif;transform:scaleX(0.9625);">Добавить</span>
<span class="t" style="left:831.43px;top:500.00px;font-size:14px;color:#c4c4c4;font-family:'DejaVu Sans',sans-serif;transform:scaleX(0.9084);">Удалить</span>
<div class="b" style="left:752px;top:523px;width:1108.5px;height:35px;background:#fff;border:1px solid #c8c8c8;border-bottom:2px solid #b8b8b8;"></div>
<div class="b" style="left:877px;top:524px;width:1px;height:32px;background:#c8c8c8;"></div>
<span class="t" style="left:757.84px;top:532.00px;font-size:17.5px;color:#3a444e;transform:scaleX(0.9361);">Тип номера</span>
<span class="t" style="left:882.84px;top:532.00px;font-size:17.5px;color:#3a444e;transform:scaleX(0.9156);">Номер телефона</span>
<span class="t" style="left:751.25px;top:573.00px;font-size:13.6px;color:#a0a0a0;font-family:'DejaVu Sans',sans-serif;transform:scaleX(0.9783);">Запрет начислений</span>
<span class="t" style="left:1029.15px;top:573.00px;font-size:13.6px;color:#a0a0a0;font-family:'DejaVu Sans',sans-serif;transform:scaleX(1.0202);">Guid</span>
<div class="b" style="left:752px;top:590px;width:50px;height:24.5px;background:#e0e0e0;border-radius:12.5px;"></div>
<div class="b" style="left:754.5px;top:592.5px;width:19.5px;height:19.5px;background:#fdfdfd;border-radius:10px;"></div>
<span class="t" style="left:804.04px;top:594.00px;font-size:17.5px;color:#222;transform:scaleX(0.9419);">Запрет начислений</span>
<span class="t" style="left:1029.9px;top:593.00px;font-size:17.5px;color:#222;transform:scaleX(.9);">015bd93a-c3f1</span>
<span class="t" style="left:751.36px;top:649.00px;font-size:18.9px;color:#111;font-family:'DejaVu Sans',sans-serif;transform:scaleX(0.9617);-webkit-text-stroke:.7px #111;">Дополнительные поля</span>
<span class="t" style="left:751.95px;top:685.00px;font-size:13.6px;color:#a0a0a0;font-family:'DejaVu Sans',sans-serif;transform:scaleX(0.9683);">Результат отправки в ФМС</span>
<div class="b" style="left:752px;top:702.5px;width:1109px;height:78.5px;background:#fff;border:1px solid #d6d6d6;"></div>
<span class="t" style="left:760.34px;top:709.00px;font-size:17.5px;color:#1c1c1c;transform:scaleX(0.9459);">Контур: Не указан номер документа</span>
<span class="t" style="left:760.34px;top:732.00px;font-size:17.5px;color:#1c1c1c;transform:scaleX(0.9439);">Контур: Не указана дата рождения</span>
<span class="t" style="left:760.34px;top:756.00px;font-size:17.5px;color:#1c1c1c;transform:scaleX(0.9352);">Контур: Не указана страна гражданства</span>
<span class="t" style="left:1066.5px;top:756.00px;font-size:17.5px;color:#1c1c1c;transform:scaleX(.93);">(адрес регистрации)</span>
<svg class="b" style="left:1844.5px;top:707.5px;" width="8.0" height="4.5" viewBox="0 0 8 4.500" preserveAspectRatio="none"><path d="M0 4.500L4 0l4 4.500z" fill="#555"/></svg>
<div class="b" style="left:1847px;top:718.5px;width:4.5px;height:28.0px;background:#cdcdcd;"></div>
<svg class="b" style="left:1844.5px;top:770px;" width="8.0" height="4.5" viewBox="0 0 8 4.500" preserveAspectRatio="none"><path d="M0 0h8L4 4.500z" fill="#555"/></svg>
<span class="t" style="left:751.95px;top:796.00px;font-size:13.6px;color:#a0a0a0;font-family:'DejaVu Sans',sans-serif;transform:scaleX(0.9491);">Составитель адресного листа</span>
<div class="b" style="left:752px;top:813.5px;width:1106.5px;height:31.5px;background:#fff;border:1px solid #d6d6d6;"></div>
<svg class="b" style="left:1825.5px;top:824.5px;" width="10.5" height="10.5" viewBox="0 0 10.500 10.500" preserveAspectRatio="none"><path d="M1 1l8.500 8.500M9.500 1L1 9.500" fill="none" stroke="#444" stroke-width="1.600"/></svg>
<div class="b" style="left:1840.5px;top:815px;width:1.0px;height:29px;background:#e6e6e6;"></div>
<svg class="b" style="left:1845.5px;top:826.5px;" width="9.0" height="4.5" viewBox="0 0 9 4.500" preserveAspectRatio="none"><path d="M0 0h9L4.500 4.500z" fill="#444"/></svg>
<span class="t" style="left:751.25px;top:862.00px;font-size:13.6px;color:#a0a0a0;font-family:'DejaVu Sans',sans-serif;transform:scaleX(0.9578);">Отказ от уплаты КС</span>
<div class="b" style="left:752px;top:879px;width:50px;height:24.5px;background:#e0e0e0;border-radius:12.5px;"></div>
<div class="b" style="left:754.5px;top:881.5px;width:19.5px;height:19.5px;background:#fdfdfd;border-radius:10px;"></div>
<span class="t" style="left:804.04px;top:884.00px;font-size:17.5px;color:#222;transform:scaleX(0.9246);">Отказ от уплаты КС</span>
<div class="b" style="left:1123px;top:504px;width:507.5px;height:374.5px;background:#fff;border-right:1px solid #dcdcdc;"></div>
<div class="b" style="left:1626px;top:504px;width:1px;height:374px;background:#e2e2e2;"></div>
<div class="b" style="left:1123px;top:523px;width:503px;height:1px;background:#bdbdbd;"></div>
<div class="b" style="left:1123px;top:555px;width:480px;height:1.5px;background:#a8a8a8;"></div>
<div class="b" style="left:1603px;top:523px;width:1px;height:33.5px;background:#8c8c8c;"></div>
<div class="b" style="left:1604px;top:555.5px;width:22px;height:1.0px;background:#c8c8c8;"></div>
<div class="b" style="left:1167.5px;top:525px;width:1.0px;height:30px;background:#d0d0d0;"></div>
<span class="t" style="left:1132.34px;top:532.00px;font-size:17.5px;color:#444;transform:scaleX(0.9817);">Код</span>
<span class="t" style="left:1174.04px;top:532.00px;font-size:17.5px;color:#444;transform:scaleX(0.9478);">Название</span>
<div class="b" style="left:1128px;top:556.4px;width:475px;height:28.25px;background:#a9c8e4;"></div>
<span class="t" style="left:1140px;top:564.00px;font-size:17.5px;color:#444;transform:scaleX(.9);">1</span>
<span class="t" style="left:1174.04px;top:564.00px;font-size:17.5px;color:#444;transform:scaleX(0.9870);">Герой РФ</span>
<div class="b" style="left:1128px;top:584.65px;width:475px;height:27.25px;background:#f2f2f2;"></div>
<span class="t" style="left:1140px;top:592.00px;font-size:17.5px;color:#444;transform:scaleX(.9);">2</span>
<span class="t" style="left:1174.04px;top:592.00px;font-size:17.5px;color:#444;transform:scaleX(1.0011);">Герой труда</span>
<span class="t" style="left:1140px;top:620.00px;font-size:17.5px;color:#444;transform:scaleX(.9);">3</span>
<span class="t" style="left:1174.04px;top:620.00px;font-size:17.5px;color:#444;transform:scaleX(0.9726);">Участник ВОВ</span>
<div class="b" style="left:1128px;top:641.15px;width:475px;height:27.25px;background:#f2f2f2;"></div>
<span class="t" style="left:1140px;top:649.00px;font-size:17.5px;color:#444;transform:scaleX(.9);">4</span>
<span class="t" style="left:1174.04px;top:649.00px;font-size:17.5px;color:#444;transform:scaleX(0.9807);">Ветераны боевых действий</span>
<span class="t" style="left:1140px;top:677.00px;font-size:17.5px;color:#444;transform:scaleX(.9);">5</span>
<span class="t" style="left:1174.04px;top:677.00px;font-size:17.5px;color:#444;transform:scaleX(0.9995);">Житель блокадного Ленинграда</span>
<div class="b" style="left:1128px;top:697.65px;width:475px;height:27.25px;background:#f2f2f2;"></div>
<span class="t" style="left:1140px;top:705.00px;font-size:17.5px;color:#444;transform:scaleX(.9);">6</span>
<span class="t" style="left:1174.04px;top:705.00px;font-size:17.5px;color:#444;transform:scaleX(0.9807);">Лица, работавшие в ВОВ</span>
<span class="t" style="left:1140px;top:733.00px;font-size:17.5px;color:#444;transform:scaleX(.9);">7</span>
<span class="t" style="left:1174.04px;top:733.00px;font-size:17.5px;color:#444;transform:scaleX(1.0096);">Инвалиды войны</span>
<div class="b" style="left:1128px;top:754.15px;width:475px;height:27.25px;background:#f2f2f2;"></div>
<span class="t" style="left:1140px;top:762.00px;font-size:17.5px;color:#444;transform:scaleX(.9);">8</span>
<span class="t" style="left:1174.04px;top:762.00px;font-size:17.5px;color:#444;transform:scaleX(1.0045);">Члены семей погибших</span>
<span class="t" style="left:1140px;top:790.00px;font-size:17.5px;color:#444;transform:scaleX(.9);">9</span>
<span class="t" style="left:1174.04px;top:790.00px;font-size:17.5px;color:#444;transform:scaleX(0.9770);">Чернобыльская АЭС</span>
<div class="b" style="left:1128px;top:810.65px;width:475px;height:27.25px;background:#f2f2f2;"></div>
<span class="t" style="left:1138.54px;top:818.00px;font-size:17.5px;color:#444;transform:scaleX(1.0232);">10</span>
<span class="t" style="left:1174.04px;top:818.00px;font-size:17.5px;color:#444;transform:scaleX(1.0095);">Инвалиды I и II групп</span>
<span class="t" style="left:1138.54px;top:846.00px;font-size:17.5px;color:#444;transform:scaleX(1.0962);">11</span>
<span class="t" style="left:1174.04px;top:846.00px;font-size:17.5px;color:#444;transform:scaleX(1.0254);">Сопровождающие</span>
<div class="b" style="left:1128px;top:868px;width:475px;height:3px;background:#f2f2f2;"></div>
<svg class="b" style="left:1611.5px;top:562px;" width="7.0" height="4" viewBox="0 0 7 4" preserveAspectRatio="none"><path d="M0 4L3.500 0 7 4z" fill="#555"/></svg>
<div class="b" style="left:1613px;top:572.5px;width:4.5px;height:136.0px;background:#cdcdcd;"></div>
<svg class="b" style="left:1611px;top:861px;" width="7" height="4" viewBox="0 0 7 4" preserveAspectRatio="none"><path d="M0 0h7L3.500 4z" fill="#555"/></svg>
<svg class="b" style="left:1615.5px;top:507.5px;" width="13.5" height="13.5" viewBox="0 0 13.500 13.500" preserveAspectRatio="none"><path d="M2 0.3999999999999999v3.200M0.3999999999999999 2h3.200" stroke="#b8b8b8" stroke-width="1" fill="none"/><path d="M6.5 0.3999999999999999v3.200M4.9 2h3.200" stroke="#b8b8b8" stroke-width="1" fill="none"/><path d="M11 0.3999999999999999v3.200M9.4 2h3.200" stroke="#b8b8b8" stroke-width="1" fill="none"/><path d="M6.5 4.9v3.200M4.9 6.5h3.200" stroke="#b8b8b8" stroke-width="1" fill="none"/><path d="M11 4.9v3.200M9.4 6.5h3.200" stroke="#b8b8b8" stroke-width="1" fill="none"/><path d="M11 9.4v3.200M9.4 11h3.200" stroke="#b8b8b8" stroke-width="1" fill="none"/></svg>
<div class="b" style="left:1123px;top:877px;width:549px;height:33px;background:#fff;border-top:2px solid #4a76a6;border-left:2px solid #4a76a6;"></div>
<div class="b" style="left:1630px;top:845px;width:42px;height:1px;background:#d6d6d6;"></div>
<svg class="b" style="left:1639.5px;top:889.5px;" width="10.5" height="10.5" viewBox="0 0 10.500 10.500" preserveAspectRatio="none"><path d="M1 1l8.500 8.500M9.500 1L1 9.500" fill="none" stroke="#444" stroke-width="1.600"/></svg>
<div class="b" style="left:1655px;top:881px;width:1px;height:28px;background:#e2e2e2;"></div>
<svg class="b" style="left:1659px;top:890.5px;" width="10" height="5.0" viewBox="0 0 10 5" preserveAspectRatio="none"><path d="M0 0h10L5 5z" fill="#444"/></svg>
<div class="b" style="left:275px;top:937.5px;width:1645px;height:53.5px;background:#fafafa;border-top:1px solid #ebebeb;"></div>
<div class="b" style="left:303px;top:947.5px;width:160.5px;height:34.0px;background:#fff;border:1px solid #d2d2d2;border-radius:5px;"></div>
<svg class="b" style="left:327.5px;top:959px;" width="17.5" height="13.5" viewBox="0 0 17.500 13.500" preserveAspectRatio="none"><path d="M1.500 7l5 5L16 2.500" fill="none" stroke="#444" stroke-width="3.200"/></svg>
<span class="t" style="left:350.43px;top:957.00px;font-size:19.5px;color:#555;transform:scaleX(0.9508);">Сохранить</span>
<div class="b" style="left:472px;top:947.5px;width:125.5px;height:34.0px;background:#fff;border:1px solid #d2d2d2;border-radius:5px;"></div>
<span class="t" style="left:493.93px;top:957.00px;font-size:19.5px;color:#555;transform:scaleX(0.9298);">Выселить</span>
<div class="b" style="left:1777.5px;top:947.5px;width:115.0px;height:34.0px;background:#fff;border:1px solid #d2d2d2;border-radius:5px;"></div>
<span class="t" style="left:1798.93px;top:957.00px;font-size:19.5px;color:#3f6d9c;transform:scaleX(0.9605);">Закрыть</span>
<div class="b" style="left:0px;top:991px;width:1920px;height:44px;background:#6f6f6f;border-bottom:2px solid #3c3c3c;"></div>
<div class="b" style="left:17.5px;top:995px;width:176.0px;height:34px;background:#fff;border:1px solid #ddd;border-radius:4px;"></div>
<svg class="b" style="left:39px;top:1003.5px;" width="17.5" height="17.5" viewBox="0 0 17.500 17.500" preserveAspectRatio="none"><circle cx="8.750" cy="8.750" r="8.750" fill="#444"/><path d="M6 6.600c0-1.600 1.200-2.600 2.800-2.600s2.800 1 2.800 2.400c0 1.800-2.600 2-2.600 3.800" fill="none" stroke="#fff" stroke-width="2"/><rect x="7.900" y="11.600" width="2.200" height="2.200" fill="#fff"/></svg>
<span class="t" style="left:61.43px;top:1004.00px;font-size:19.5px;color:#555;transform:scaleX(0.9445);">Справка (F1)</span>
<div class="b" style="left:209px;top:997px;width:81px;height:31px;background:#f8644a;border-radius:3px;"></div>
<span class="t" style="left:221.44px;top:1005.00px;font-size:17.5px;color:#5a0f0a;transform:scaleX(0.9082);">DEMO2</span>
<svg class="b" style="left:308px;top:1003px;" width="58" height="16" viewBox="0 0 58 16" preserveAspectRatio="none"><rect x="0.3" y="0.5" width="5.7" height="14.5" fill="#e9573f"/><rect x="8.1" y="5.2" width="6.3" height="6.3" fill="#e9573f"/><rect x="16.5" y="6.2" width="5.7" height="4.3" fill="#e9573f"/><rect x="26.4" y="0.9" width="5.2" height="14" fill="#e9573f"/><rect x="35.2" y="0.5" width="5.2" height="14.5" fill="#e9573f"/><rect x="43.6" y="4.1" width="5.7" height="7.8" fill="#e9573f"/><rect x="51.9" y="5.2" width="5.7" height="5.8" fill="#e9573f"/></svg>
<span class="t" style="left:375.04px;top:1005.00px;font-size:17.5px;color:#fff;transform:scaleX(0.9456);">Обновление непрочитанных задач</span>
<span class="t" style="left:1658.04px;top:1005.00px;font-size:17.5px;color:#ddd;transform:scaleX(0.9751);">Tesla Hotel</span>
<span class="t" style="left:1749.01px;top:1004.00px;font-size:18px;color:#fff;font-weight:bold;transform:scaleX(0.9267);">18 декабря 2021 г.</span>
<div class="b" style="left:1115px;top:496px;width:565px;height:421.5px;border:8px solid #e61e28;"></div>
<div class="b" style="left:371px;top:234px;width:96px;height:51px;background:#2e75bb;border:8px solid #e61e28;"></div>
<span class="t" style="left:391.45px;top:250.00px;font-size:19px;color:#f4f9ff;transform:scaleX(0.8881);">Гости</span>
<span class="t" style="left:439.18px;top:250.00px;font-size:15px;color:#173a63;font-weight:bold;transform:scaleX(1.0115);">2</span>
</body></html>
